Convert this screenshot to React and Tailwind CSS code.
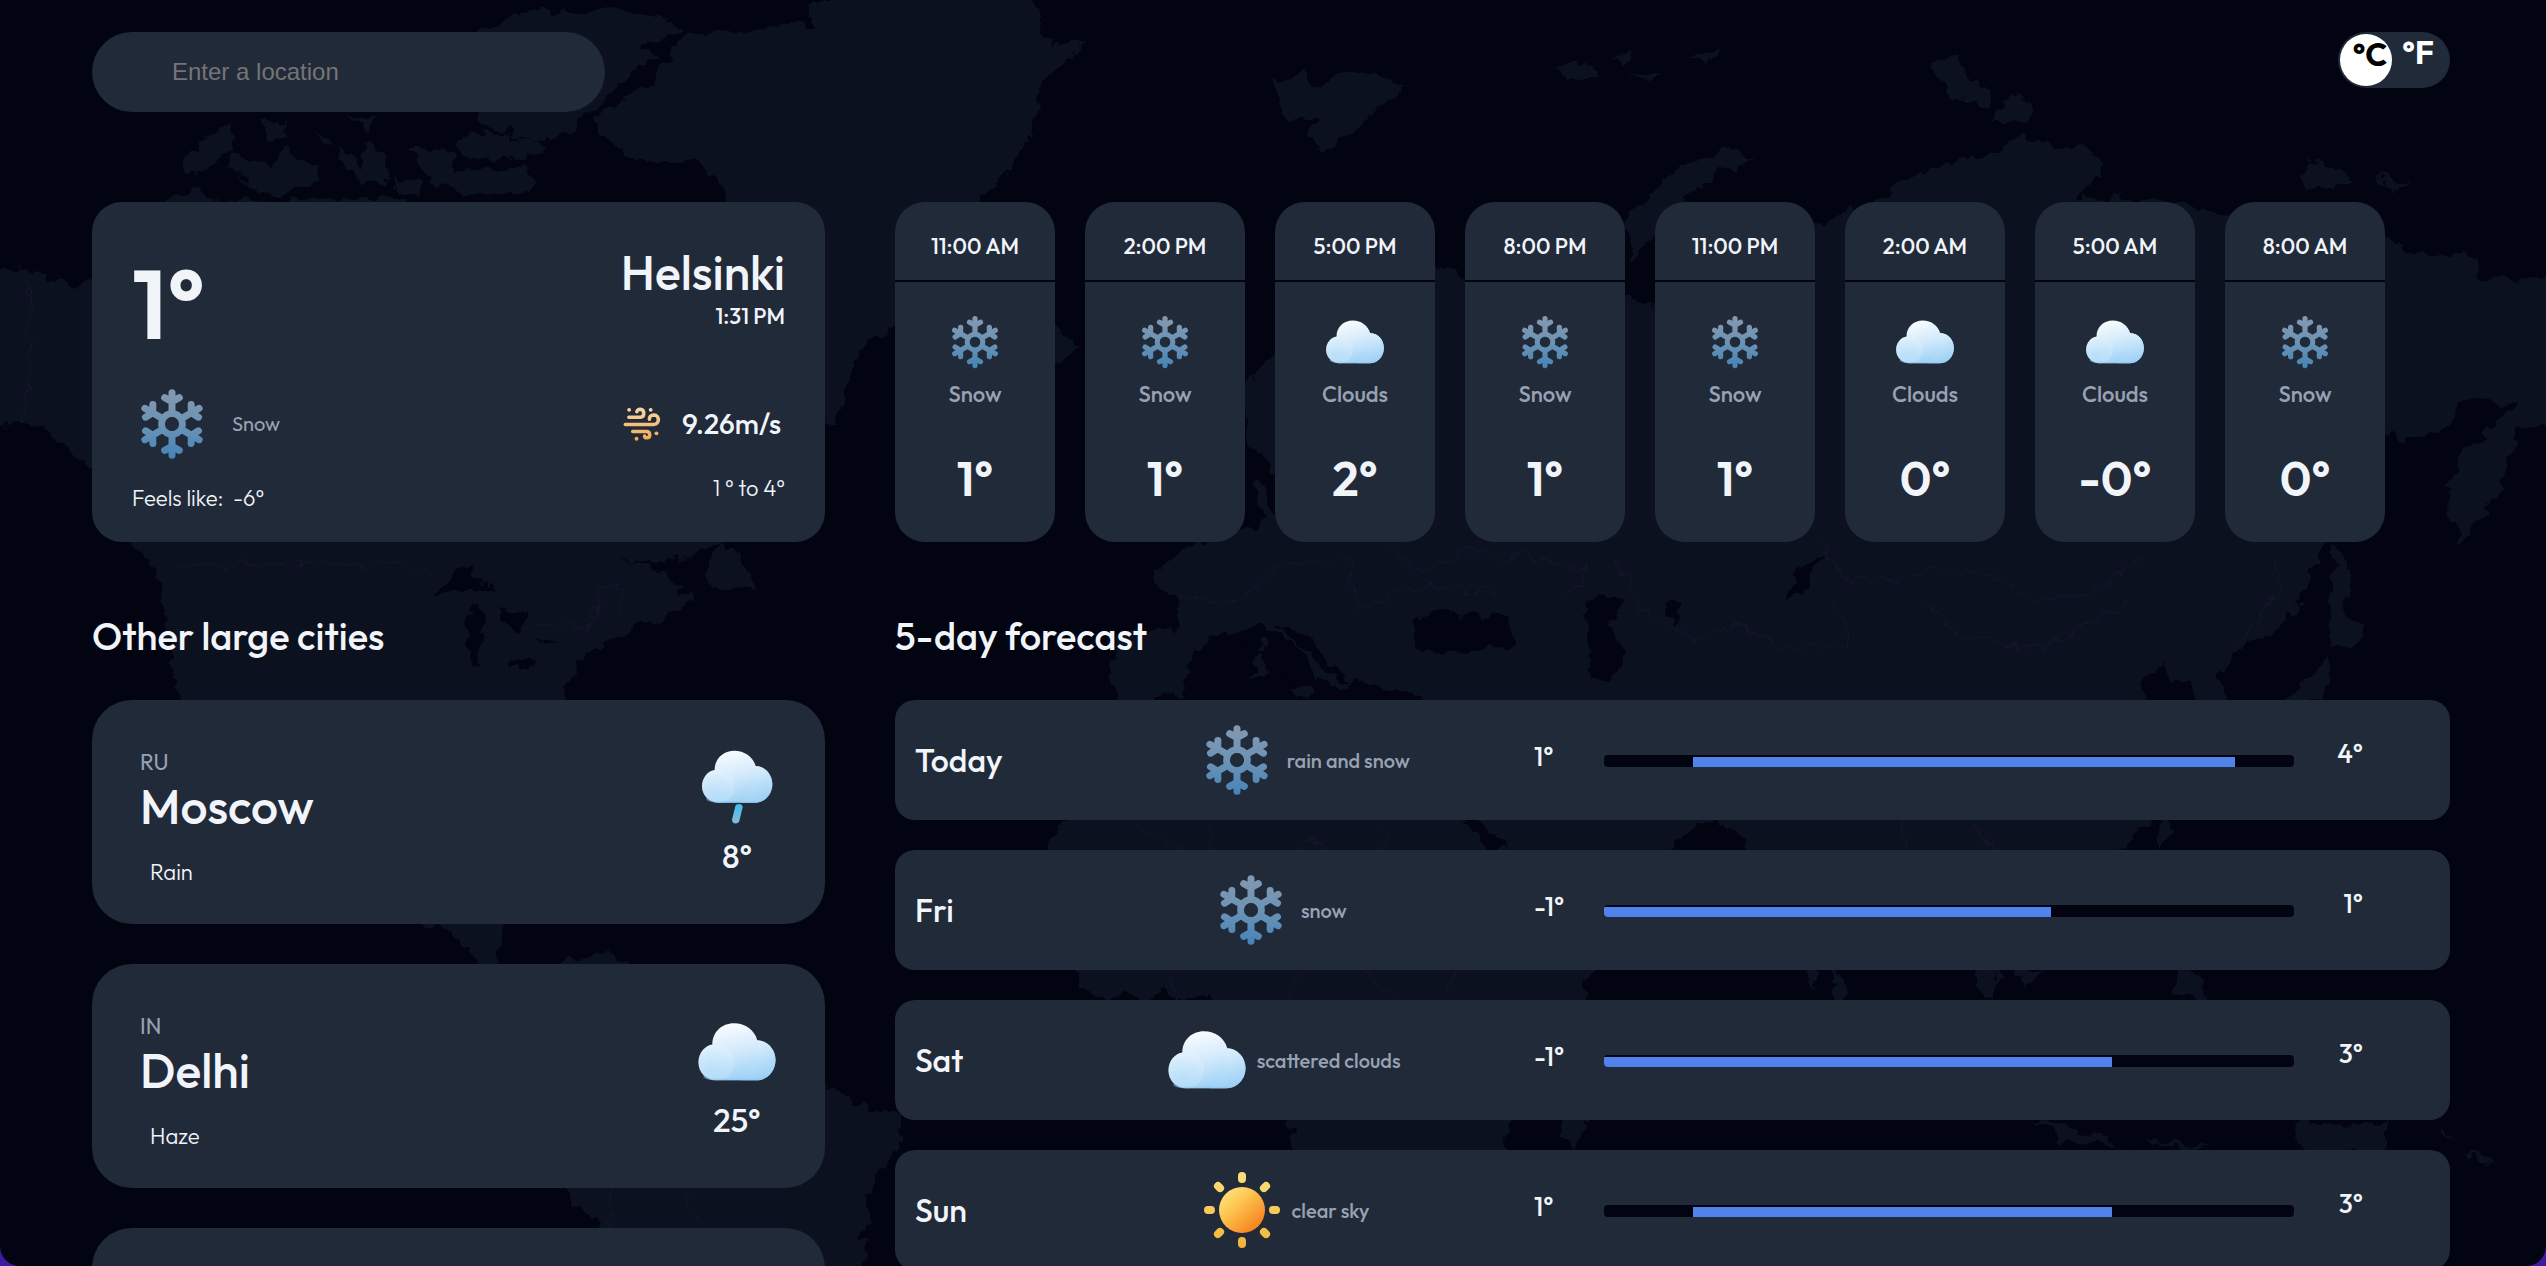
import React, { useId, useState } from "react";

const HOURS = [
  { time: "11:00 AM", kind: "Snow", temp: "1°" },
  { time: "2:00 PM", kind: "Snow", temp: "1°" },
  { time: "5:00 PM", kind: "Clouds", temp: "2°" },
  { time: "8:00 PM", kind: "Snow", temp: "1°" },
  { time: "11:00 PM", kind: "Snow", temp: "1°" },
  { time: "2:00 AM", kind: "Clouds", temp: "0°" },
  { time: "5:00 AM", kind: "Clouds", temp: "-0°" },
  { time: "8:00 AM", kind: "Snow", temp: "0°" },
];

const CITIES = [
  { code: "RU", name: "Moscow", sky: "Rain", temp: "8°", icon: "rain" },
  { code: "IN", name: "Delhi", sky: "Haze", temp: "25°", icon: "cloud" },
];

const DAYS = [
  { day: "Today", icon: "snow", sky: "rain and snow", low: "1°", high: "4°", start: 12.9, end: 91.4 },
  { day: "Fri", icon: "snow", sky: "snow", low: "-1°", high: "1°", start: 0, end: 64.8 },
  { day: "Sat", icon: "cloud", sky: "scattered clouds", low: "-1°", high: "3°", start: 0, end: 73.6 },
  { day: "Sun", icon: "sun", sky: "clear sky", low: "1°", high: "3°", start: 12.9, end: 73.6 },
];

const ANGLES_6 = [0, 60, 120, 180, 240, 300];
const ANGLES_8 = [0, 45, 90, 135, 180, 225, 270, 315];

function SnowIcon({ className }) {
  const id = useId();
  return (
    <svg viewBox="-120 -120 240 240" className={className} aria-hidden="true">
      <defs>
        <linearGradient id={id} gradientUnits="userSpaceOnUse" x1="0" y1="-105" x2="0" y2="105">
          <stop offset="0" stopColor="#8599b0" />
          <stop offset="0.5" stopColor="#6c93b5" />
          <stop offset="1" stopColor="#4583b8" />
        </linearGradient>
        <mask id={id + "m"} maskUnits="userSpaceOnUse" x="-120" y="-120" width="240" height="240">
          <g fill="none" stroke="#fff" strokeWidth="21" strokeLinecap="round" strokeLinejoin="round">
            <circle r="31" />
            {ANGLES_6.map((a) => (
              <path key={a} d="M0-36V-94M-22-79 0-67 22-79" transform={`rotate(${a})`} />
            ))}
          </g>
          <circle r="21" fill="#000" />
        </mask>
      </defs>
      <rect x="-120" y="-120" width="240" height="240" fill={`url(#${id})`} mask={`url(#${id}m)`} />
    </svg>
  );
}

function CloudShape({ id }) {
  return (
    <g>
      <defs>
        <linearGradient id={id + "a"} x1="0.3" y1="0" x2="0.6" y2="1">
          <stop offset="0" stopColor="#fbfdff" />
          <stop offset="0.5" stopColor="#d3eafb" />
          <stop offset="1" stopColor="#9bd0f5" />
        </linearGradient>
        <linearGradient id={id + "b"} x1="0.2" y1="0" x2="0.5" y2="1">
          <stop offset="0" stopColor="#e6f4fe" />
          <stop offset="0.5" stopColor="#bfe2fa" />
          <stop offset="1" stopColor="#9fd0f6" />
        </linearGradient>
        <radialGradient id={id + "c"} cx="0.35" cy="0.7" r="0.7">
          <stop offset="0" stopColor="#b8dffa" stopOpacity="0.9" />
          <stop offset="0.7" stopColor="#cfeafc" stopOpacity="0.6" />
          <stop offset="1" stopColor="#eef8ff" stopOpacity="0.3" />
        </radialGradient>
      </defs>
      <path
        d="M85 186C57 186 36 164 36 137 36 110 55 90 74 88 74 54 100 30 133 30 165 30 190 50 197 76 226 77 247 102 247 130 247 162 224 186 195 186Z"
        fill={`url(#${id}a)`}
      />
      <path d="M197 76C226 77 247 102 247 130 247 162 224 186 195 186H150C185 160 205 120 197 76Z" fill={`url(#${id}b)`} opacity="0.75" />
      <circle cx="85" cy="137" r="49" fill={`url(#${id}c)`} opacity="0.6" />
      <path d="M50 178C60 184 72 186 85 186H195C210 186 222 180 230 170 218 180 205 182 195 182H85C72 182 60 181 50 172Z" fill="#8fc4f0" opacity="0.6" />
    </g>
  );
}

function CloudIcon({ className }) {
  const id = useId();
  return (
    <svg viewBox="32 -1 219 219" className={className} aria-hidden="true">
      <CloudShape id={id} />
    </svg>
  );
}

function RainIcon({ className }) {
  const id = useId();
  return (
    <svg viewBox="21 22 240 240" className={className} aria-hidden="true">
      <CloudShape id={id} />
      <defs>
        <linearGradient id={id + "r"} x1="0" y1="0" x2="0" y2="1">
          <stop offset="0" stopColor="#3dbff0" />
          <stop offset="1" stopColor="#86b9d3" />
        </linearGradient>
      </defs>
      <path
        d="M136 197C138 187 159 187 158 200L148 241C145 252 124 250 126 237Z"
        fill={`url(#${id}r)`}
      />
    </svg>
  );
}

function SunIcon({ className }) {
  const id = useId();
  return (
    <svg viewBox="-40 -40 80 80" className={className} aria-hidden="true">
      <defs>
        <linearGradient id={id} x1="0.15" y1="0.1" x2="0.85" y2="0.9">
          <stop offset="0" stopColor="#ffe07a" />
          <stop offset="0.35" stopColor="#fdc650" />
          <stop offset="1" stopColor="#f77f1c" />
        </linearGradient>
        <linearGradient id={id + "r"} gradientUnits="userSpaceOnUse" x1="0" y1="-38" x2="0" y2="38">
          <stop offset="0" stopColor="#fddf7c" />
          <stop offset="1" stopColor="#f3b23c" />
        </linearGradient>
      </defs>
      <circle r="23" fill={`url(#${id})`} />
      {ANGLES_8.map((a) => {
        const r = (a * Math.PI) / 180;
        return (
          <line
            key={a}
            x1={Math.cos(r) * 31}
            y1={Math.sin(r) * 31}
            x2={Math.cos(r) * 34 + 0.01}
            y2={Math.sin(r) * 34 + 0.01}
            stroke={`url(#${id}r)`}
            strokeWidth="8"
            strokeLinecap="round"
          />
        );
      })}
    </svg>
  );
}

function WindIcon({ className }) {
  const id = useId();
  return (
    <svg viewBox="39 42 120 112" className={className} aria-hidden="true">
      <defs>
        <linearGradient id={id} gradientUnits="userSpaceOnUse" x1="0" y1="47" x2="0" y2="150">
          <stop offset="0" stopColor="#f8d7a6" />
          <stop offset="1" stopColor="#f2ab4d" />
        </linearGradient>
      </defs>
      <g fill="none" stroke={`url(#${id})`} strokeWidth="11" strokeLinecap="round">
        <path d="M47 99.500H136C154 98 155 71 136 70 127 70 121 76 122 83" />
        <path d="M58 77H94C108 76 108 53 94 52 87 52 83 56 83 60" />
        <path d="M70 121H114C126 122 126 141 114 141 109 141 107 138 107 135" />
      </g>
      <g fill={`url(#${id})`}>
        <circle cx="59" cy="54" r="6" />
        <circle cx="126" cy="54" r="6" />
        <circle cx="144" cy="127" r="6" />
        <circle cx="82" cy="144" r="6" />
      </g>
    </svg>
  );
}

const ICONS = { snow: SnowIcon, cloud: CloudIcon, rain: RainIcon, sun: SunIcon };

function WeatherIcon({ name, className }) {
  const Icon = ICONS[name];
  return <Icon className={className} />;
}

function WorldMap() {
  return (
    <svg
      viewBox="0 0 1568 780"
      preserveAspectRatio="xMidYMid slice"
      className="pointer-events-none absolute inset-0 -z-10 h-full w-full"
      aria-hidden="true"
    >
      <filter id="coast" x="0" y="0" width="1568" height="780" filterUnits="userSpaceOnUse" colorInterpolationFilters="sRGB">
        <feTurbulence type="fractalNoise" baseFrequency="0.09" numOctaves="3" seed="4" />
        <feDisplacementMap in="SourceGraphic" scale="13" xChannelSelector="R" yChannelSelector="G" />
      </filter>
      <g filter="url(#coast)">
        <g fill="#0c1120">
          {/* Greenland and the Canadian Arctic */}
          <path d="M422 22 456 18 500 15 497 5 545-10H632L642 25 668 28 642 50 635 80 625 105 600 125 590 170 551 200 530 215 512 264 490 250 470 180 446 117 426 99 392 100 372 84 365 73 402 52 408 40Z" />
          <path d="M294 18 321 9 365 6 405 9 422 18 392 29 405 33 389 44 375 60 355 78 330 88 297 76Z" />
          <path d="M112 98 128 84 140 78 146 84 128 106 114 106ZM142 92 165 104 178 90 184 98 198 104 196 112 168 120 140 106ZM206 90 222 102 224 90 240 96 238 114 216 110ZM242 110 260 112 256 120 246 118ZM252 90 278 96 280 106 328 104 326 118 290 120 266 112ZM280 90 300 80 336 90 332 98 286 98ZM160 74 176 74 176 86 164 88ZM196 78 206 90 198 88ZM214 70 232 70 226 80ZM102 122 120 118 140 125 230 122 250 124 250 140 100 140Z" />
          {/* North and South America */}
          <path d="M-10 166 20 167 46 178 60 170 120 150 260 140 340 170 420 220 480 300 445 334 425 344 380 346 405 348 426 370 399 386 375 392 355 411 346 431 350 480 330 490 290 490 280 530 300 545 309 569 308 593 330 603 350 593 372 585 387 593 430 610 470 640 509 670 540 683 555 686 555 707 536 728 531 790H372L368 755 345 731 345 700 335 650 320 610 297 593 287 580 264 569 200 540 150 480 110 431 103 400 102 380 95 350 80 334 57 290 20 262-10 262Z" />
          <path d="M445 334 456 342 466 364 450 362 432 360ZM1437 334 1449 352 1444 372 1440 400 1436 374Z" />
          {/* Iceland, Svalbard and the Russian Arctic islands */}
          <path d="M630 205 651 201 664 213 651 226 632 222ZM784 50 800 46 812 54 826 44 866 50 856 62 846 64 838 80 816 94 804 82 812 72 794 74 786 62ZM956 42 972 38 984 46 966 49ZM990 32 1008 34 1000 42ZM1004 46 1024 46 1016 51ZM1036 36 1058 32 1054 40ZM1074 90 1078 98 1040 118 1018 146 1004 160 1002 136 1024 112 1050 96ZM1190 40 1206 34 1212 48 1226 56 1224 68 1208 62 1194 52ZM1226 76 1240 58 1254 68 1248 74ZM1414 112 1422 99 1440 104 1452 110 1444 116 1420 116ZM1460 108 1482 114 1476 119Z" />
          {/* Eurasia */}
          <path d="M709 356 732 336 760 330 778 320 770 296 776 292 784 318 800 300 770 276 764 236 785 219 840 170 884 164 904 170 920 190 960 190 1001 182 1020 190 1040 160 1060 146 1100 140 1145 130 1163 118 1180 106 1206 98 1230 94 1246 80 1260 90 1286 92 1296 104 1280 122 1349 125 1373 134 1469 144 1489 157 1522 158 1530 170 1580 172V262L1552 262 1539 302 1514 336 1507 306 1515 280 1549 248 1522 245 1502 266 1486 271 1469 266 1440 290 1432 334 1417 370 1399 393 1386 393 1366 417 1374 431 1370 446 1356 446 1349 427 1346 417 1336 422 1333 409 1316 422 1323 431 1330 470 1324 505 1308 523 1270 545 1240 560 1230 615 1221 615 1216 597 1200 560 1180 530 1160 550 1130 560 1120 597 1118 610 1112 597 1077 523 1064 508 1047 505 1030 523 1000 545 940 570 924 523 913 505 905 490 890 470 890 440 860 425 830 425 812 420 800 400 780 385 749 392 732 409 726 428 700 436 687 431 683 416 689 388 726 388 724 370Z" />
          <path d="M720 330 738 296 728 280 748 300 754 326ZM1437 375 1459 383 1448 398 1436 398ZM1432 402 1438 418 1426 431 1404 436 1412 428ZM1332 506 1337 512 1331 524 1327 516Z" />
          {/* Africa */}
          <path d="M690 440 760 436 800 446 880 450 900 480 906 505 926 524 950 570 984 590 976 615 940 650 930 690 926 708 900 750 830 760 797 707 793 690 780 640 740 612 672 615 660 597 646 560 646 523 655 505 670 470Z" />
          <path d="M980 650 990 660 970 710 960 700ZM1128 596 1140 610 1138 620 1128 612ZM1240 596 1258 598 1250 610ZM1340 596 1356 600 1360 618 1336 612ZM1253 691 1270 694 1300 702 1302 709 1270 702ZM1312 704 1362 704 1350 708ZM1417 688 1440 696 1470 690 1468 712 1452 706 1436 716 1414 706ZM1502 692 1512 702 1504 698ZM1518 706 1528 712 1540 720 1526 718Z" />
        </g>
        {/* Inland seas and lakes */}
        <g fill="#020412">
          <path d="M732 409 749 392 766 396 796 420 806 434 812 418 822 430 834 418 862 430 864 446 760 440 726 432ZM786 384 806 392 830 420 814 412ZM871 385 884 374 902 380 920 376 935 396 910 402 876 402ZM976 372 992 366 1000 372 990 384 1002 402 994 420 978 416 980 394ZM1026 372 1036 370 1030 384ZM266 366 286 350 306 364 290 362ZM288 378 298 374 294 410 288 408ZM306 374 326 378 318 390 310 384ZM312 410 330 404 326 412ZM328 398 344 394 340 398ZM1100 370 1108 350 1124 342 1110 366ZM903 505 914 505 926 524 918 524Z" />
        </g>
        {/* Corsica, Sardinia and Sicily */}
        <path fill="#0c1120" d="M775 392 780 390 780 400 776 400ZM773 404 780 402 780 416 774 418ZM794 424 808 424 804 431Z" />
        <g fill="none" stroke="#141529" strokeWidth="1">
          <path d="M18 170V262M110 348H250L266 356M330 386H360L372 364 384 362V380M724 370 760 372 790 350 830 344 836 372 870 360 920 366M850 340 880 352 900 340 940 344 980 350 960 370M996 344 1010 376 1040 392 1070 386 1100 400M1120 334 1130 352 1160 360 1190 348 1230 356 1250 370 1290 366 1320 344M1130 372 1140 396 1120 400 1100 398M1183 370 1206 392 1250 400 1284 386 1312 370M1404 344 1400 372 1376 396M694 506 730 524M746 506V524M798 524 808 518 820 524M852 506V524M376 732V757M420 732 430 757M720 598 724 615M800 598 790 615M840 598 860 615M892 615 896 600M1172 505V524M1216 505 1226 524" />
        </g>
      </g>
    </svg>
  );
}

function UnitSwitch() {
  const [unit, setUnit] = useState("C");
  const base = "flex size-[52px] items-start justify-center rounded-full text-[32px] font-bold";
  return (
    <div role="group" aria-label="Temperature unit" className="flex h-14 w-28 justify-between rounded-full bg-[#212a39] p-0.5">
      <button type="button" aria-pressed={unit === "C"} onClick={() => setUnit("C")} className={base + " pl-2 leading-10" + (unit === "C" ? " bg-white text-black" : " text-white")}>
        °C
      </button>
      <button type="button" aria-pressed={unit === "F"} onClick={() => setUnit("F")} className={base + " pr-2 leading-9" + (unit === "F" ? " bg-white text-black" : " text-white")}>
        °F
      </button>
    </div>
  );
}

function CurrentCard() {
  return (
    <section className="flex h-[340px] justify-between rounded-[30px] bg-[#212a39] px-10 pt-11">
      <div className="flex flex-col">
        <p className="mt-2.5 text-[96px] leading-[96px] font-semibold">1°</p>
        <div className="mt-8 flex items-center gap-5">
          <SnowIcon className="size-20" />
          <span className="text-[20px] text-[#98a2b3]">Snow</span>
        </div>
        <p className="mt-5 text-[22px] leading-7 font-light">Feels like:&nbsp; -6°</p>
      </div>
      <div className="flex flex-col items-end">
        <h1 className="text-[48px] leading-[52px] font-medium">Helsinki</h1>
        <p className="text-[22px] leading-9 font-medium">1:31 PM</p>
        <div className="mt-[70px] flex items-center gap-5 pr-1">
          <WindIcon className="h-9 w-10" />
          <span className="text-[28px] leading-10 font-medium">9.26m/s</span>
        </div>
        <p className="mt-7 text-[22px] leading-8 font-light">1 ° to 4°</p>
      </div>
    </section>
  );
}

function HourCard({ time, kind, temp }) {
  return (
    <li className="flex h-[340px] w-40 shrink-0 flex-col items-center rounded-[30px] bg-[#212a39]">
      <p className="w-full border-b-2 border-[#020412] pt-[30px] pb-5 text-center text-[22px] leading-7 font-medium">{time}</p>
      <WeatherIcon name={kind === "Snow" ? "snow" : "cloud"} className="mt-[30px] size-[60px]" />
      <p className="mt-1.5 text-[22px] leading-8 font-medium text-[#98a2b3]">{kind}</p>
      <p className="mt-[38px] text-[48px] leading-[60px] font-semibold">{temp}</p>
    </li>
  );
}

function CityCard({ code, name, sky, temp, icon }) {
  return (
    <li className="flex h-56 justify-between rounded-[40px] bg-[#212a39] px-12 pt-12">
      <div>
        <p className="text-[22px] leading-7 text-[#98a2b3]">{code}</p>
        <h3 className="text-[48px] leading-[60px] font-medium">{name}</h3>
        <p className="mt-5 ml-2.5 text-[22px] leading-8 font-light">{sky}</p>
      </div>
      <div className="flex flex-col items-center">
        <WeatherIcon name={icon} className="size-20" />
        <p className="mt-2 text-[32px] leading-10 font-medium">{temp}</p>
      </div>
    </li>
  );
}

function DayRow({ day, icon, sky, low, high, start, end }) {
  return (
    <li className="flex h-[120px] items-center rounded-[20px] bg-[#212a39] pr-[87px] pl-5">
      <h3 className="text-[32px] leading-10 font-medium">{day}</h3>
      <div className="ml-[70px] flex flex-1 items-center justify-center gap-2.5">
        <WeatherIcon name={icon} className="size-20" />
        <span className="pt-0.5 text-[20px] font-medium text-[#98a2b3]">{sky}</span>
      </div>
      <p className="w-[70px] pb-1.5 text-[26px] leading-8 font-medium">{low}</p>
      <div className="mt-0.5 flex h-3 w-[690px] items-end overflow-hidden rounded bg-[#020412]">
        <div
          className="h-2.5 bg-[#5083ec]"
          style={{ marginLeft: `${start}%`, width: `${end - start}%` }}
        />
      </div>
      <p className="w-[69px] pb-3 text-right text-[26px] leading-8 font-medium">{high}</p>
    </li>
  );
}

export default function App() {
  return (
    <div className="h-screen bg-[#3b1ba0]">
      <main
        className="relative isolate h-full overflow-hidden rounded-b-[20px] bg-[#020412] pt-8 pr-24 pl-[92px] font-['Outfit','Lato',sans-serif] text-slate-100"
      >
        <WorldMap />
        <header className="flex items-start justify-between">
          <input
            type="text"
            aria-label="Enter a location"
            placeholder="Enter a location"
            className="h-20 w-[513px] rounded-[40px] bg-[#212a39] px-20 font-['Liberation_Sans',sans-serif] text-[24px] outline-none placeholder:text-[#757575]"
          />
          <UnitSwitch />
        </header>

        <div className="mt-[90px] grid grid-cols-[733fr_1555fr] gap-[70px]">
          <CurrentCard />
          <ul className="flex gap-[30px]">
            {HOURS.map((h, i) => (
              <HourCard key={i} {...h} />
            ))}
          </ul>

          <section>
            <h2 className="text-[38px] leading-[48px] font-medium">Other large cities</h2>
            <ul className="mt-10 flex flex-col gap-10">
              {CITIES.map((c) => (
                <CityCard key={c.name} {...c} />
              ))}
              {/* Placeholder for the next city while it loads */}
              <li aria-hidden="true" className="h-56 rounded-[40px] bg-[#212a39]" />
            </ul>
          </section>

          <section>
            <h2 className="text-[38px] leading-[48px] font-medium">5-day forecast</h2>
            <ul className="mt-10 flex flex-col gap-[30px]">
              {DAYS.map((d) => (
                <DayRow key={d.day} {...d} />
              ))}
            </ul>
          </section>
        </div>
      </main>
    </div>
  );
}
